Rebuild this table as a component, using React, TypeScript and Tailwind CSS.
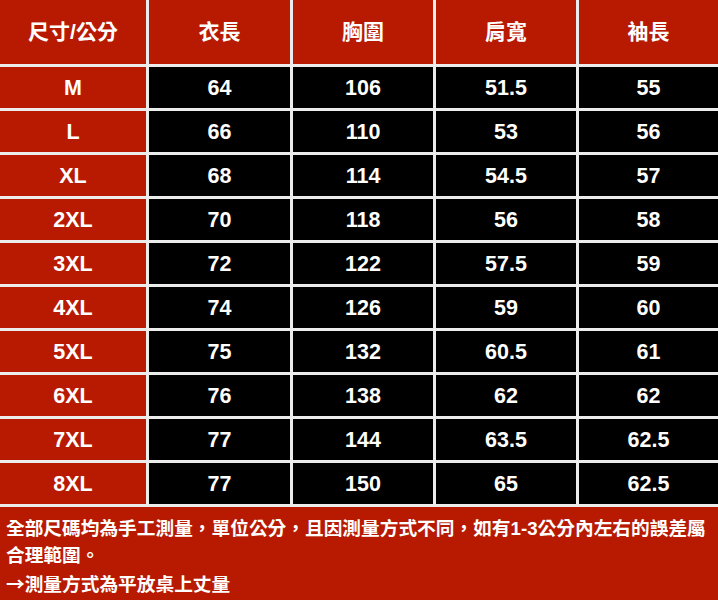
import React from "react";

const headers = ["尺寸/公分", "衣長", "胸圍", "肩寬", "袖長"];
const rows: string[][] = [
  ["M", "64", "106", "51.5", "55"],
  ["L", "66", "110", "53", "56"],
  ["XL", "68", "114", "54.5", "57"],
  ["2XL", "70", "118", "56", "58"],
  ["3XL", "72", "122", "57.5", "59"],
  ["4XL", "74", "126", "59", "60"],
  ["5XL", "75", "132", "60.5", "61"],
  ["6XL", "76", "138", "62", "62"],
  ["7XL", "77", "144", "63.5", "62.5"],
  ["8XL", "77", "150", "65", "62.5"],
];

export default function App() {
  return (
    <div
      className="w-[718px] h-[600px] flex flex-col bg-[#ececec] overflow-hidden text-white"
      style={{ fontFamily: '"Liberation Sans", "Noto Sans CJK TC", sans-serif' }}
    >
      <div className="grid grid-cols-[146px_141px_140px_140px_139px] grid-rows-[64px_repeat(10,41px)] gap-[3px] pb-[3px]">
        {headers.map((h) => (
          <div
            key={h}
            className="bg-[#b71a01] flex items-center justify-center text-[21px] font-bold"
          >
            {h}
          </div>
        ))}
        {rows.map((r) =>
          r.map((c, i) => (
            <div
              key={r[0] + i}
              className={
                i === 0
                  ? "bg-[#b71a01] flex items-center justify-center pt-[2px] text-[21.5px] font-bold"
                  : "bg-black flex items-center justify-center pt-[2px] text-[21.5px] font-bold"
              }
            >
              {c}
            </div>
          ))
        )}
      </div>
      <div className="flex-1 bg-[#b71a01] px-[6px] pt-[8px] text-[18.7px] leading-[27px] font-bold">
        <p>全部尺碼均為手工測量，單位公分，且因測量方式不同，如有1-3公分內左右的誤差屬合理範圍。</p>
        <p>
          <span className="font-['Noto_Sans_CJK_TC']">→</span>測量方式為平放桌上丈量
        </p>
      </div>
    </div>
  );
}
